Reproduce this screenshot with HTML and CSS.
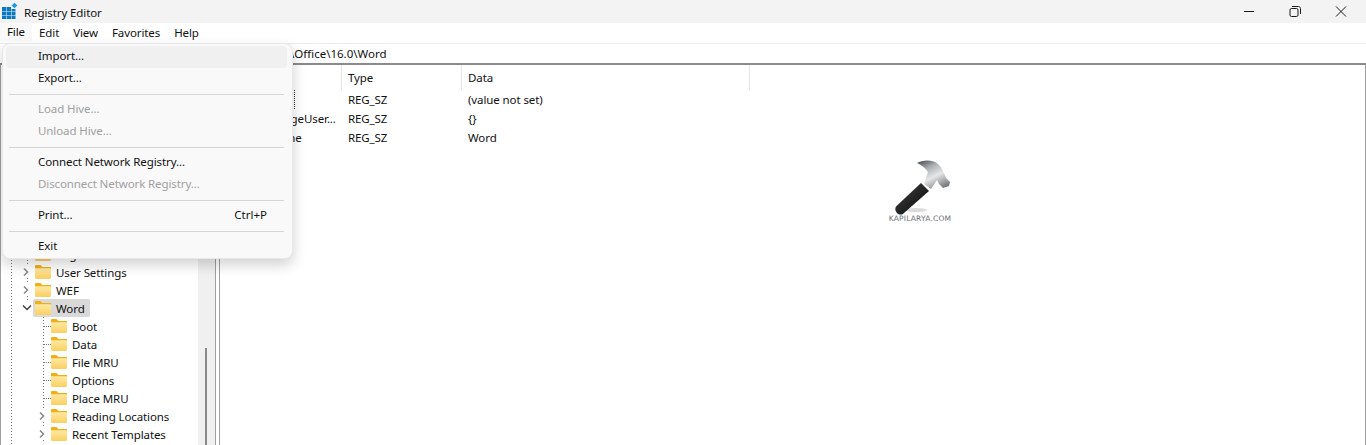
FILE: index.html
```html
<!DOCTYPE html>
<html lang="en">
<head>
    <meta charset="UTF-8">
    <title>Registry Editor</title>
    <link rel="stylesheet" href="styles.css">
</head>
<body>
    <svg class="defs" width="0" height="0">
        <defs>
            <linearGradient id="folder-fill" x1="0" y1="0" x2="0" y2="1">
                <stop offset="0" stop-color="#ffe9a6"/>
                <stop offset="1" stop-color="#fbcf5f"/>
            </linearGradient>
            <linearGradient id="steel" x1="0.1" y1="0" x2="0.7" y2="1">
                <stop offset="0" stop-color="#4d5053"/>
                <stop offset="0.3" stop-color="#aeb1b3"/>
                <stop offset="0.6" stop-color="#e6e7e8"/>
                <stop offset="1" stop-color="#787b7e"/>
            </linearGradient>
            <linearGradient id="grip" x1="0" y1="0" x2="1" y2="1">
                <stop offset="0" stop-color="#444"/>
                <stop offset="1" stop-color="#060606"/>
            </linearGradient>
            <symbol id="folder" viewBox="0 0 16 14">
                <path d="M0 1.200C0 .5.5 0 1.200 0h4.200l2 2H16v2H0z" fill="#f2ae12"/>
                <path d="M0 3.200h15c.6 0 1 .4 1 1v8.600c0 .7-.5 1.200-1.200 1.200H1.200C.5 14 0 13.500 0 12.800z" fill="url(#folder-fill)"/>
            </symbol>
            <symbol id="chev-right" viewBox="0 0 8 10">
                <path d="M2 1.500l3.500 3.500L2 8.500" fill="none" stroke="#858585" stroke-width="1.500"/>
            </symbol>
            <symbol id="chev-down" viewBox="0 0 10 8">
                <path d="M1 1.500l4 4 4-4" fill="none" stroke="#404040" stroke-width="1.500"/>
            </symbol>
        </defs>
    </svg>

    <div class="titlebar">
        <svg class="app-icon" width="18" height="18" viewBox="0 0 18 18">
            <path d="M1 6h4.300v4H1zM5.800 6h4.300v4H5.800zM10.600 8h3.900v2h-3.900zM1 10.500h4.300v4H1zM5.800 10.500h4.300v4H5.800zM10.600 10.500h3.900v4h-3.900zM1 15h4.300v3H1zM5.800 15h4.300v3H5.800zM10.600 15h3.900v3h-3.900z" fill="#0b79c0"/>
            <path d="M13.500 1.700l2.800 2.800-2.800 2.800-2.800-2.800z" fill="#1a9ae2"/>
        </svg>
        <span class="app-title">Registry Editor</span>
        <div class="window-controls">
            <svg width="12" height="12" viewBox="0 0 12 12"><path d="M1 5.500h10" stroke="#1a1a1a" fill="none"/></svg>
            <svg width="12" height="12" viewBox="0 0 12 12"><rect x="1" y="2.500" width="8" height="8" rx="1.500" stroke="#1a1a1a" fill="none"/><path d="M3 .5h6.500c1 0 2 1 2 2V8" stroke="#1a1a1a" fill="none"/></svg>
            <svg width="12" height="12" viewBox="0 0 12 12"><path d="M1 .5l10 10M11 .5l-10 10" stroke="#1a1a1a" fill="none"/></svg>
        </div>
    </div>

    <div class="menubar">
        <span class="menu-title menu-open">File</span>
        <span class="menu-title">Edit</span>
        <span class="menu-title">View</span>
        <span class="menu-title">Favorites</span>
        <span class="menu-title">Help</span>
    </div>

    <div class="address">
        <span class="address-path">\Office\16.0\Word</span>
    </div>

    <div class="main">
        <div class="tree-pane">
            <div class="tree">
                <div class="tree-row">
                    <svg class="chev"><use href="#chev-right"/></svg>
                    <svg class="folder"><use href="#folder"/></svg>
                    <span class="label">Registration</span>
                </div>
                <div class="tree-row">
                    <svg class="chev"><use href="#chev-right"/></svg>
                    <svg class="folder"><use href="#folder"/></svg>
                    <span class="label">User Settings</span>
                </div>
                <div class="tree-row">
                    <svg class="chev"><use href="#chev-right"/></svg>
                    <svg class="folder"><use href="#folder"/></svg>
                    <span class="label">WEF</span>
                </div>
                <div class="tree-row">
                    <svg class="chev-open"><use href="#chev-down"/></svg>
                    <div class="selected">
                        <svg class="folder"><use href="#folder"/></svg>
                        <span class="label">Word</span>
                    </div>
                </div>
                <div class="children">
                    <div class="tree-row leaf">
                        <svg class="folder"><use href="#folder"/></svg>
                        <span class="label">Boot</span>
                    </div>
                    <div class="tree-row leaf">
                        <svg class="folder"><use href="#folder"/></svg>
                        <span class="label">Data</span>
                    </div>
                    <div class="tree-row leaf">
                        <svg class="folder"><use href="#folder"/></svg>
                        <span class="label">File MRU</span>
                    </div>
                    <div class="tree-row leaf">
                        <svg class="folder"><use href="#folder"/></svg>
                        <span class="label">Options</span>
                    </div>
                    <div class="tree-row leaf">
                        <svg class="folder"><use href="#folder"/></svg>
                        <span class="label">Place MRU</span>
                    </div>
                    <div class="tree-row child">
                        <svg class="chev"><use href="#chev-right"/></svg>
                        <svg class="folder"><use href="#folder"/></svg>
                        <span class="label">Reading Locations</span>
                    </div>
                    <div class="tree-row child">
                        <svg class="chev"><use href="#chev-right"/></svg>
                        <svg class="folder"><use href="#folder"/></svg>
                        <span class="label">Recent Templates</span>
                    </div>
                </div>
            </div>
            <div class="scrollbar"><div class="thumb"></div></div>
        </div>

        <div class="list-pane">
            <div class="list-head">
                <div class="col-name">Name</div>
                <div class="col-type">Type</div>
                <div class="col-data">Data</div>
            </div>
            <div class="list-row">
                <div class="col-name"><span class="focused">(Default)</span></div>
                <div class="col-type">REG_SZ</div>
                <div class="col-data">(value not set)</div>
            </div>
            <div class="list-row">
                <div class="col-name">LanguageUser...</div>
                <div class="col-type">REG_SZ</div>
                <div class="col-data">{}</div>
            </div>
            <div class="list-row">
                <div class="col-name">Guideline</div>
                <div class="col-type">REG_SZ</div>
                <div class="col-data">Word</div>
            </div>

            <div class="logo">
                <svg width="70" height="58" viewBox="0 0 70 58">
                    <ellipse cx="29" cy="53" rx="11" ry="2" fill="#000" opacity="0.14"/>
                    <path d="M34 26l8 8-25 22c-2 2-5 2-7 0s-2.500-5-.5-7z" fill="url(#grip)"/>
                    <path d="M30 6c6-3 16-4 22 2 3 3 5 8 7 13l4 4-1 4-6 2-4-4-2-4-6 9-7-5 4-12c-3-4-6-7-11-9z" fill="url(#steel)"/>
                </svg>
                <span class="logo-text">KAPILARYA.COM</span>
            </div>
        </div>
    </div>

    <div class="file-menu">
        <div class="menu-item hover">Import...</div>
        <div class="menu-item">Export...</div>
        <div class="menu-sep"></div>
        <div class="menu-item disabled">Load Hive...</div>
        <div class="menu-item disabled">Unload Hive...</div>
        <div class="menu-sep"></div>
        <div class="menu-item">Connect Network Registry...</div>
        <div class="menu-item disabled">Disconnect Network Registry...</div>
        <div class="menu-sep"></div>
        <div class="menu-item">Print...<span class="shortcut">Ctrl+P</span></div>
        <div class="menu-sep"></div>
        <div class="menu-item">Exit</div>
    </div>
</body>
</html>
```

FILE: styles.css
```css
html, body {
    margin: 0;
    height: 100%;
    overflow: hidden;
}
body {
    font-family: "Noto Sans", "Open Sans", sans-serif;
    font-size: 11.5px;
    letter-spacing: -0.1px;
    color: #111;
    background: #fff;
    display: flex;
    flex-direction: column;
    position: relative;
}
.defs {
    position: absolute;
}

/* title bar */
.titlebar {
    height: 23px;
    flex: none;
    background: #f3f3f3;
    display: flex;
    align-items: center;
    padding-left: 1px;
}
.app-icon {
    margin: 0 5px 4px 0;
}
.app-title {
    flex: 1;
    padding-top: 1px;
}
.window-controls {
    display: flex;
    gap: 34px;
    padding-right: 19px;
}

/* menu bar */
.menubar {
    height: 18px;
    flex: none;
    display: flex;
    align-items: center;
}
.menu-title {
    margin-right: 14px;
}
.menu-open {
    height: 100%;
    line-height: 18px;
    padding: 0 7px;
    margin-right: 7px;
    background: #f9f9f9;
}

/* address */
.address {
    height: 19px;
    flex: none;
    margin-top: 2px;
    border-top: 1px solid #ececec;
    border-bottom: 2px solid #8a8a8a;
    display: flex;
    align-items: center;
    padding-left: 290px;
    white-space: nowrap;
    letter-spacing: 0;
}

/* panes */
.main {
    flex: 1;
    min-height: 0;
    display: flex;
    border-left: 1px solid #a0a0a0;
    border-right: 1px solid #a0a0a0;
}
.tree-pane {
    width: 214px;
    flex: none;
    display: flex;
    border-right: 1px solid #a0a0a0;
}
.tree {
    flex: 1;
    padding-top: 180px;
    background-image:
        repeating-linear-gradient(#777 0 1px, transparent 1px 3px),
        repeating-linear-gradient(#777 0 1px, transparent 1px 3px);
    background-position: 10px 0, 26px 0;
    background-repeat: no-repeat;
    background-size: 1px 100%, 1px 235px;
}
.scrollbar {
    width: 17px;
    flex: none;
    background: #f0f0f0;
}
.thumb {
    width: 2px;
    height: 97px;
    margin: 283px 0 0 7px;
    background: #8a8a8a;
}
.tree-row {
    height: 18px;
    display: flex;
    align-items: center;
    padding-left: 21px;
    white-space: nowrap;
}
.tree-row .label {
    margin-left: 5px;
}
.chev {
    width: 8px;
    height: 12px;
    margin-right: 5px;
    flex: none;
    background: #fff;
}
.chev-open {
    width: 10px;
    height: 8px;
    margin-right: 1px;
    flex: none;
    background: #fff;
}
.folder {
    width: 16px;
    height: 14px;
    flex: none;
}
.selected {
    display: flex;
    align-items: center;
    height: 18px;
    width: 55px;
    padding-left: 2px;
    background: #d9d9d9;
    border-radius: 2px;
}
.children {
    background-image: repeating-linear-gradient(#777 0 1px, transparent 1px 3px);
    background-size: 1px 100%;
    background-position: 42px 0;
    background-repeat: no-repeat;
}
.child {
    padding-left: 37px;
}
.leaf {
    padding-left: 50px;
    background-image: repeating-linear-gradient(90deg, #777 0 1px, transparent 1px 2px);
    background-size: 7px 1px;
    background-position: 43px 9px;
    background-repeat: no-repeat;
}

/* value list */
.list-pane {
    flex: 1;
    min-width: 0;
    border-left: 1px solid #a0a0a0;
    margin-left: 3px;
}
.list-head {
    height: 25px;
    display: flex;
    align-items: center;
}
.list-head > div {
    height: 100%;
    display: flex;
    align-items: center;
    border-right: 1px solid #e5e5e5;
}
.list-row {
    height: 19px;
    display: flex;
    align-items: center;
}
.col-name {
    width: 122px;
    padding-left: 31px;
    box-sizing: border-box;
    white-space: nowrap;
}
.col-type {
    width: 120px;
    padding-left: 6px;
    box-sizing: border-box;
}
.col-data {
    width: 288px;
    padding-left: 6px;
    box-sizing: border-box;
}
.focused {
    display: inline-block;
    margin-left: -4px;
    outline: 1px dotted #333;
    outline-offset: 1px;
}
.logo {
    width: 70px;
    margin: 10px 0 0 667px;
    display: flex;
    flex-direction: column;
    align-items: center;
}
.logo-text {
    font-family: "DejaVu Sans", sans-serif;
    font-size: 7.5px;
    letter-spacing: 0.2px;
    line-height: 8px;
    color: #6b6f75;
    white-space: nowrap;
    margin-right: 4px;
}

/* file menu */
.file-menu {
    position: absolute;
    left: 2px;
    top: 43px;
    width: 291px;
    height: 216px;
    box-sizing: border-box;
    padding: 2px 5px 2px 3px;
    background: #f9f9f9;
    border: 1px solid #e8e8e8;
    border-radius: 8px;
    box-shadow: 0 6px 14px rgba(0, 0, 0, 0.18);
}
.menu-item {
    height: 22px;
    line-height: 19px;
    padding: 0 20px 0 32px;
    border-radius: 4px;
    display: flex;
    justify-content: space-between;
}
.menu-item.hover {
    background: #f0f0f0;
}
.menu-item.disabled {
    color: #a0a0a0;
}
.menu-sep {
    height: 1px;
    margin: 4px 3px;
    background: #d5d5d5;
}
.shortcut {
    letter-spacing: 0;
}
```
